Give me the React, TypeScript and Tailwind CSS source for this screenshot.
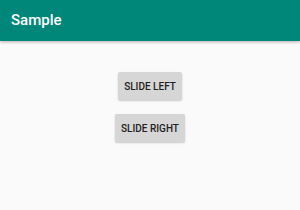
export default function App() {
  return (
    <main
      className="flex flex-col w-[300px] h-[210px] bg-[#fafafa]"
      style={{ fontFamily: "Roboto, 'Liberation Sans', sans-serif" }}
    >
      <header className="h-[41px] bg-[#00877a] flex items-center px-[11px] shadow-[0_1px_3px_rgba(0,0,0,0.3)]">
        <h1 className="text-white text-[15px] font-medium">Sample</h1>
      </header>
      <div className="flex flex-col items-center pt-[31px] gap-[14px]">
        <button className="h-[28px] px-[6px] bg-[#d6d6d6] rounded-[2px] text-[10px] font-medium text-[#222] shadow-[0_1px_2px_rgba(0,0,0,0.2)]">
          SLIDE LEFT
        </button>
        <button className="h-[28px] px-[6px] bg-[#d6d6d6] rounded-[2px] text-[10px] font-medium text-[#222] shadow-[0_1px_2px_rgba(0,0,0,0.2)]">
          SLIDE RIGHT
        </button>
      </div>
    </main>
  );
}
